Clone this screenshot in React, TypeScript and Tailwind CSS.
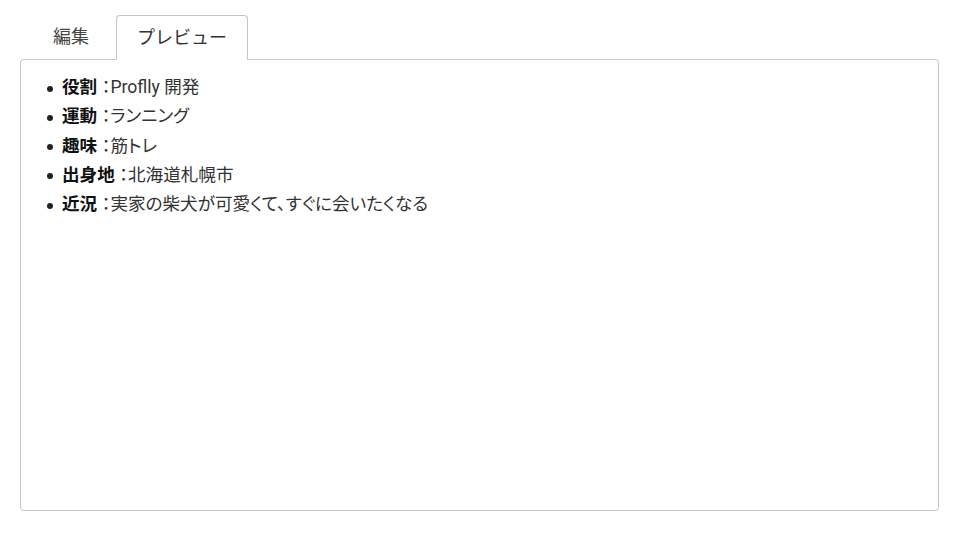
import React from "react";

const items: [string, string][] = [
  ["役割", "Proflly 開発"],
  ["運動", "ランニング"],
  ["趣味", "筋トレ"],
  ["出身地", "北海道札幌市"],
  ["近況", "実家の柴犬が可愛くて、すぐに会いたくなる"],
];

export default function App() {
  return (
    <div
      className="w-[960px] h-[543px] bg-white text-[#333333] pl-[20px] pr-[21px] pt-[14px]"
      style={{ fontFamily: 'Roboto, "Noto Sans CJK JP", sans-serif' }}
    >
      <div className="flex items-end pl-[12px] gap-[6px] relative z-10">
        <div className="px-5 py-2 text-[18px] leading-[27px] border border-transparent text-[#444444]">
          編集
        </div>
        <div className="px-5 py-2 text-[18px] leading-[27px] border border-[#c4c4c4] border-b-white rounded-t-[4px] bg-white mb-[-1px] text-[#333333]">
          プレビュー
        </div>
      </div>
      <div className="h-[452px] border border-[#c4c4c4] rounded-[4px] pt-[13px]">
        <ul className="pl-[26px] [font-feature-settings:'palt']">
          {items.map(([k, v]) => (
            <li key={k} className="flex items-center text-[17.6px] leading-[29.25px]">
              <span className="w-[6px] h-[6px] rounded-full bg-[#222222] mr-[9px] mt-[2px]" />
              <span className="font-bold text-[#111111]">{k}</span>
              <span>&nbsp;：{v}</span>
            </li>
          ))}
        </ul>
      </div>
    </div>
  );
}
